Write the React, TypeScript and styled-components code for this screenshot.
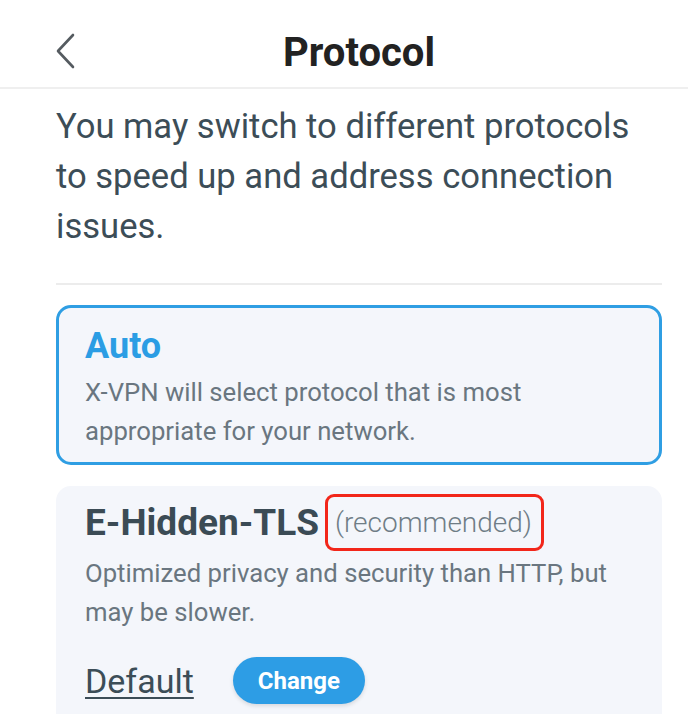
import React, {FC} from 'react';
import styled, {createGlobalStyle} from 'styled-components';

const GlobalStyle = createGlobalStyle`
  html, body {
    margin: 0;
    padding: 0;
    background: #ffffff;
  }
  body {
    font-family: Roboto, "Noto Sans", Arial, sans-serif;
    -webkit-font-smoothing: antialiased;
  }
`;

const Page = styled.div`
  width: 688px;
  height: 714px;
  overflow: hidden;
  background: #ffffff;
`;

const Header = styled.header`
  display: grid;
  grid-template-columns: 20px 1fr;
  align-items: start;
  height: 89px;
  padding: 33px 45px 0 55px;
  box-sizing: border-box;
  border-bottom: 2px solid #efefef;
`;

const BackButton = styled.button`
  display: flex;
  padding: 0;
  border: 0;
  background: none;
  cursor: pointer;
`;

const Title = styled.h1`
  margin: 0;
  text-align: center;
  font-size: 40px;
  line-height: 40px;
  font-weight: 700;
  color: #222222;
`;

const Intro = styled.p`
  margin: 12px 0 0;
  padding: 0 30px 0 56px;
  font-size: 34.6px;
  line-height: 50px;
  color: #3c4d57;
`;

const Divider = styled.hr`
  margin: 32px 26px 0 56px;
  height: 2px;
  border: 0;
  background: #ececec;
`;

const Card = styled.div<{ $selected?: boolean; $gap: number }>`
  margin: ${(p) => p.$gap}px 26px 0 56px;
  padding: ${(p) => (p.$selected ? '16px 26px 11px' : '5px 26px 0')};
  border: 3px solid ${(p) => (p.$selected ? '#2f9ee3' : 'transparent')};
  border-radius: 15px;
  background: #f4f6fb;
`;

const NameRow = styled.div`
  display: flex;
  align-items: center;
  gap: 6px;
`;

const Name = styled.div<{ $selected?: boolean }>`
  font-size: ${(p) => (p.$selected ? 36 : 37)}px;
  line-height: 44px;
  font-weight: 700;
  color: ${(p) => (p.$selected ? '#2b9de4' : '#3b4b55')};
`;

const Highlight = styled.span`
  display: inline-flex;
  align-items: center;
  box-sizing: border-box;
  height: 57px;
  padding: 0 9px 0 7px;
  border: 3.5px solid #f2261a;
  border-radius: 9px;
  font-size: 28px;
  font-weight: 300;
  color: #6f7d86;
`;

const Description = styled.p<{ $gap: number }>`
  margin: ${(p) => p.$gap}px 0 0;
  font-size: 25.7px;
  line-height: 39px;
  color: #6a7680;
`;

const Actions = styled.div`
  display: flex;
  align-items: center;
  gap: 39px;
  margin-top: 25px;
  padding-bottom: 24px;
`;

const DefaultLink = styled.a`
  font-size: 34px;
  line-height: 40px;
  color: #3c4d57;
  text-decoration: underline;
  text-decoration-thickness: 2px;
  text-underline-offset: 4px;
`;

const ChangeButton = styled.button`
  height: 47px;
  padding: 0 25px;
  border: 0;
  border-radius: 24px;
  background: #2d9de5;
  font-family: Roboto, "Noto Sans", Arial, sans-serif;
  font-size: 24px;
  font-weight: 700;
  color: #ffffff;
  box-shadow: 0 2px 4px rgba(0, 0, 0, 0.12);
`;

const ChevronLeft: FC = () => (
  <svg width="20" height="36" viewBox="0 0 20 36" fill="none">
    <path d="M18 2 L3 18 L18 34" stroke="#555b60" strokeWidth="2.6" strokeLinecap="round" strokeLinejoin="round"/>
  </svg>
);

const App: FC = () => {
  return (
    <Page>
      <GlobalStyle/>
      <Header>
        <BackButton aria-label="Back"><ChevronLeft/></BackButton>
        <Title>Protocol</Title>
      </Header>
      <Intro>You may switch to different protocols to speed up and address connection issues.</Intro>
      <Divider/>
      <Card $selected $gap={20}>
        <Name $selected>Auto</Name>
        <Description $gap={5}>X-VPN will select protocol that is most appropriate for your network.</Description>
      </Card>
      <Card $gap={21}>
        <NameRow>
          <Name>E-Hidden-TLS</Name>
          <Highlight>(recommended)</Highlight>
        </NameRow>
        <Description $gap={3}>Optimized privacy and security than HTTP, but may be slower.</Description>
        <Actions>
          <DefaultLink>Default</DefaultLink>
          <ChangeButton>Change</ChangeButton>
        </Actions>
      </Card>
    </Page>
  );
};

export default App;
